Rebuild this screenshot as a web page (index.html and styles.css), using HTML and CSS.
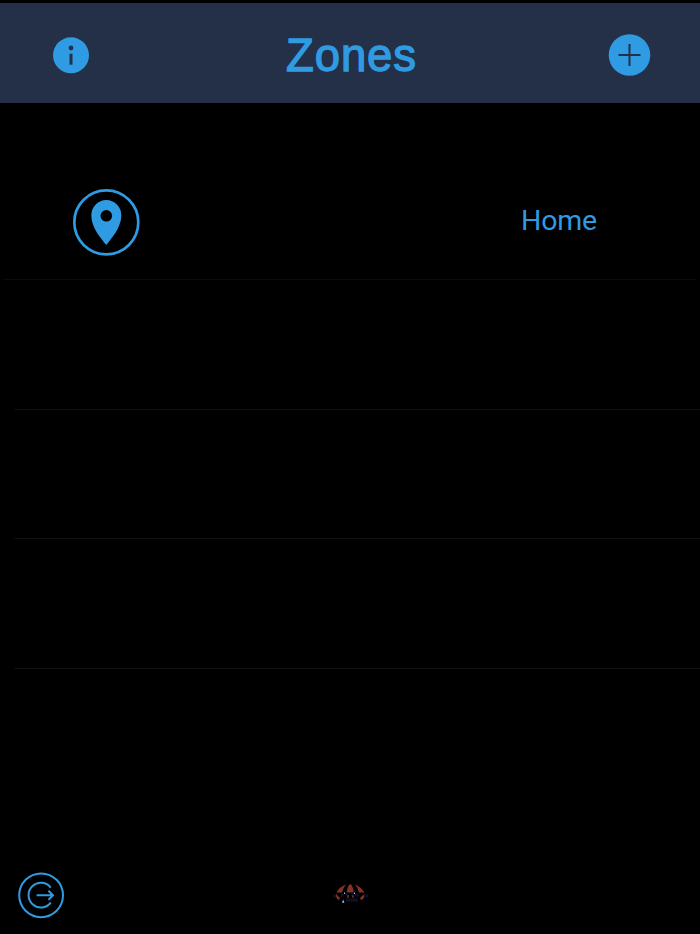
FILE: index.html
```html
<!DOCTYPE html>
<html lang="en">
<head>
<meta charset="utf-8">
<title>Zones</title>
<link rel="stylesheet" href="styles.css">
</head>
<body>
<div class="app">
  <header class="header">
    <svg class="info" viewBox="0 0 36 36">
      <circle class="fill" cx="18" cy="18.3" r="18"/>
      <circle class="cut" cx="18" cy="11" r="2.4"/>
      <path class="cut" d="M16.5 16.7h3v11h-3z"/>
    </svg>
    <h1 class="title">Zones</h1>
    <svg class="add" viewBox="0 0 42 42">
      <circle class="fill" cx="20.5" cy="21" r="20.8"/>
      <path class="plus" d="M9.5 21h22M20.5 10v22"/>
    </svg>
  </header>
  <ul class="zones">
    <li class="zone first">
      <svg class="pin" viewBox="0 0 68 68">
        <circle class="ring" cx="34.3" cy="34.3" r="32"/>
        <path class="fill" fill-rule="evenodd" d="M34.3 57C30 51.5 19.3 40 19.3 27.5a15 15.5 0 0 1 30 0C49.3 40 38.5 51.5 34.3 57zM34.3 22a5.8 5.8 0 1 0 0 11.6a5.8 5.8 0 0 0 0-11.6z"/>
      </svg>
      <span class="name">Home</span>
    </li>
    <li class="zone"></li>
    <li class="zone"></li>
    <li class="zone"></li>
  </ul>
  <footer class="footer">
    <svg class="logout" viewBox="0 0 46 46">
      <circle cx="23.1" cy="23.3" r="21.9"/>
      <path d="M32.8 15.6A12.4 12.4 0 1 0 32.8 30.6M18.6 23.3H35M30.4 18.7l4.6 4.6l-4.6 4.6"/>
    </svg>
    <svg class="logo" viewBox="0 0 38 26">
      <g class="canopy">
        <path d="M5.5 10.5Q8 5 15 2.5Q12 6 11 10.5zM16 10.5Q16 4 19.2 2Q22.5 4 22.5 10.5zM24 2.5Q30 5 33.5 10.5L28 10.5Q27 6 24 2.5z"/>
        <path d="M5 12l4 4l-1 2q-3-1-3-5zM16 13h2l-.5 3h-1zM21 13h2l-.5 3h-1zM33.5 12l-4.5 4l1 2q3.5-1 3.5-5z"/>
      </g>
      <path class="navy" d="M2 14h3M10 13h3M14 12h3M20 12h3M24 13h4M33 14h4M15 18h12"/>
      <path class="shine" d="M13 10.5h1v1.5h-1zM23 10.5h1v1.5h-1zM11 20.8l1.2-3.3l1.2 3.3z"/>
    </svg>
  </footer>
</div>
</body>
</html>
```
FILE: styles.css
```css
* { box-sizing: border-box; }
body { margin: 0; background: #000; color: #2f9be2; }
.app { display: flex; flex-direction: column; height: 934px; padding-top: 3px; overflow: hidden; }
.header { display: flex; align-items: center; justify-content: space-between; height: 100px; padding: 3px 49px 0 53px; background: #242f48; }
svg { overflow: visible; }
.fill { fill: #2f9be2; }
.cut { fill: #242f48; }
.info { width: 36px; height: 36px; }
.add { width: 42px; height: 42px; }
.plus { stroke: #242f48; stroke-width: 2; }
.title { margin: 2px 0 0 5px; font: 400 45.5px/52px "Liberation Sans", Arial, sans-serif; letter-spacing: .9px; -webkit-text-stroke: 1.3px #2f9be2; }
.zones { margin: 0; padding: 0; list-style: none; }
.zone { height: 129.5px; margin-left: 14px; border-bottom: 1px solid #101010; }
.first { display: flex; align-items: flex-end; justify-content: space-between; height: 177px; margin: 0 3px; padding: 0 100px 23px 69px; border-color: #0b0b0b; }
.pin { width: 68px; height: 68px; }
.ring { fill: none; stroke: #2f9be2; stroke-width: 2.7; }
.name { padding-bottom: 18px; font: 400 28.5px/34px Roboto, sans-serif; letter-spacing: -.2px; }
.footer { display: grid; grid-template-columns: 1fr 38px 1fr; align-items: center; margin-top: auto; height: 78px; padding: 0 18px; }
.logout { width: 46px; height: 46px; fill: none; stroke: #2f9be2; stroke-width: 2; }
.logo { width: 38px; height: 26px; }
.canopy { fill: #813328; }
.navy { stroke: #0c102a; stroke-width: 3; }
.shine { fill: #aebbd5; }
```
